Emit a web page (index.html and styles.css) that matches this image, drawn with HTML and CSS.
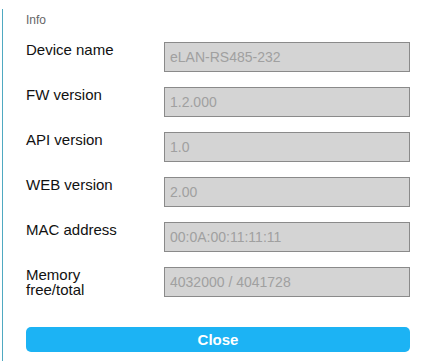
FILE: index.html
```html
<!DOCTYPE html>
<html lang="en">
<head>
  <meta charset="UTF-8">
  <title>Info</title>
  <link rel="stylesheet" href="styles.css">
</head>
<body>
  <div class="dialogo">
    <div class="titulo">Info</div>

    <div class="linhas">
      <div class="linha">
        <label>Device name</label>
        <input type="text" value="eLAN-RS485-232" readonly>
      </div>
      <div class="linha">
        <label>FW version</label>
        <input type="text" value="1.2.000" readonly>
      </div>
      <div class="linha">
        <label>API version</label>
        <input type="text" value="1.0" readonly>
      </div>
      <div class="linha">
        <label>WEB version</label>
        <input type="text" value="2.00" readonly>
      </div>
      <div class="linha">
        <label>MAC address</label>
        <input type="text" value="00:0A:00:11:11:11" readonly>
      </div>
      <div class="linha">
        <label>Memory<br>free/total</label>
        <input type="text" value="4032000 / 4041728" readonly>
      </div>
    </div>

    <button type="button">Close</button>
  </div>
</body>
</html>
```

FILE: styles.css
```css
body {
  margin: 0;
  background-color: #fff;
  font-family: "Liberation Sans", Arial, sans-serif;
}

.dialogo {
  box-sizing: border-box;
  margin: 9px 0 0 2px;
  height: 352px;
  width: 424px;
  border-left: 1px solid #4fa9c1;
  padding: 4px 0 0 23px;
}

.titulo {
  font-size: 12px;
  line-height: 14px;
  color: #666;
}

.linhas {
  display: flex;
  flex-direction: column;
  gap: 15px;
  margin-top: 15px;
}

.linha {
  display: grid;
  grid-template-columns: 138px 246px;
  height: 30px;
  align-items: start;
}

label {
  font-size: 15px;
  line-height: 15px;
  color: #111;
}

input {
  box-sizing: border-box;
  width: 246px;
  height: 30px;
  margin: 0;
  padding: 0 5px;
  border: 1px solid #8a8a8a;
  background-color: #d4d4d4;
  color: #a0a0a0;
  font-family: "Liberation Sans", Arial, sans-serif;
  font-size: 14px;
  outline: none;
}

button {
  display: block;
  margin-top: 30px;
  width: 384px;
  height: 25px;
  padding: 0;
  border: none;
  border-radius: 5px;
  background-color: #1cb3f4;
  color: #fff;
  font-family: "Liberation Sans", Arial, sans-serif;
  font-size: 15px;
  font-weight: bold;
  cursor: pointer;
}
```
